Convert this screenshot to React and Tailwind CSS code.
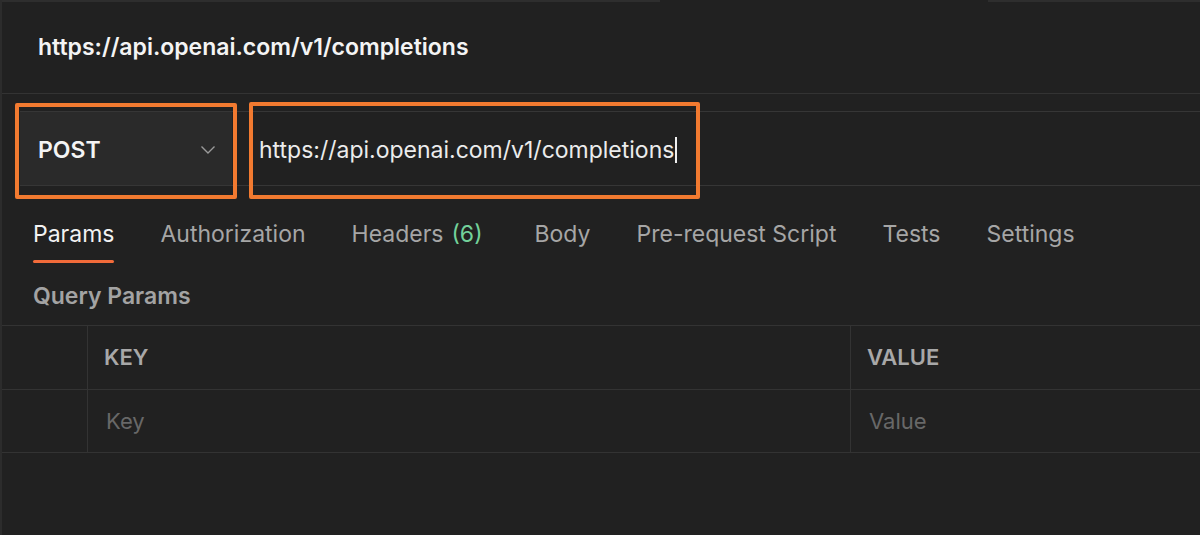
export default function App() {
  const tabs = [
    { label: "Params", active: true },
    { label: "Authorization" },
    { label: "Headers", count: "(6)" },
    { label: "Body" },
    { label: "Pre-request Script" },
    { label: "Tests" },
    { label: "Settings" },
  ];
  return (
    <div
      className="relative flex w-[1200px] h-[535px] overflow-hidden bg-[#212121]"
      style={{ fontFamily: "Inter, 'Noto Sans', sans-serif" }}
    >
      <div className="w-[2px] shrink-0 bg-[#2c2c2c]" />
      <div className="flex flex-1 flex-col">
        {/* top strip */}
        <div className="flex h-[2px]">
          <div className="w-[658px] bg-[#2e2e2e]" />
          <div className="flex-1" />
          <div className="w-[212px] bg-[#2e2e2e]" />
        </div>
        {/* title */}
        <div className="flex h-[92px] items-center border-b border-[#333333] pl-[36px]">
          <span className="text-[23px] font-semibold text-[#f4f4f4]">
            https://api.openai.com/v1/completions
          </span>
        </div>
        <div className="h-[17px]" />
        {/* url row */}
        <div className="ml-[18px] flex h-[75px] border-y border-[#363636]">
          <div className="flex w-[212px] items-center justify-between bg-[#2a2a2a] pl-[18px] pr-[16px] pt-[3px]">
            <span className="text-[23px] font-semibold text-[#f4f4f4]">POST</span>
            <svg width="16" height="10" viewBox="0 0 16 10" fill="none">
              <polyline points="1.5,1.5 8,8 14.5,1.5" stroke="#9a9a9a" strokeWidth="1.4" />
            </svg>
          </div>
          <div className="flex flex-1 items-center pl-[27px] pt-[3px]">
            <span className="text-[23px] font-normal text-[#ececec]">
              https://api.openai.com/v1/completions
            </span>
            <span className="ml-[1px] inline-block h-[26px] w-[2px] bg-[#f0f0f0]" />
          </div>
        </div>
        {/* tabs */}
        <div className="flex gap-[46px] pl-[31px] pt-[34px]">
          {tabs.map((t) => (
            <div key={t.label} className="flex flex-col">
              <span
                className={`whitespace-nowrap text-[23px] leading-[28px] ${
                  t.active ? "text-[#f2f2f2]" : "text-[#a6a6a6]"
                }`}
              >
                {t.label}
                {t.count && (
                  <span className="ml-[8px] mr-[6px] text-[#73d19a]">{t.count}</span>
                )}
              </span>
              <div
                className={`mt-[12px] h-[3px] rounded-full ${
                  t.active ? "bg-[#f26b3a]" : "bg-transparent"
                }`}
              />
            </div>
          ))}
        </div>
        {/* query params */}
        <div className="mt-[19px] pl-[31px] text-[23px] font-semibold leading-[28px] text-[#a3a3a3]">
          Query Params
        </div>
        {/* table */}
        <div className="mt-[15px] border-t border-[#333333]">
          <div className="flex h-[64px] border-b border-[#333333]">
            <div className="w-[86px] border-r border-[#333333]" />
            <div className="flex w-[763px] items-center border-r border-[#333333] pl-[16px] text-[22px] font-semibold text-[#a8a8a8]">
              KEY
            </div>
            <div className="flex flex-1 items-center pl-[16px] text-[22px] font-semibold text-[#a8a8a8]">
              VALUE
            </div>
          </div>
          <div className="flex h-[63px] border-b border-[#333333]">
            <div className="w-[86px] border-r border-[#333333]" />
            <div className="flex w-[763px] items-center border-r border-[#333333] pl-[18px] text-[22px] text-[#686868]">
              Key
            </div>
            <div className="flex flex-1 items-center pl-[18px] text-[22px] text-[#686868]">
              Value
            </div>
          </div>
        </div>
      </div>
      {/* annotation boxes */}
      <div className="pointer-events-none absolute left-[15px] top-[103px] h-[96px] w-[222px] rounded-[2px] border-[4px] border-[#f27a30]" />
      <div className="pointer-events-none absolute left-[249px] top-[102px] h-[97px] w-[451px] rounded-[2px] border-[4px] border-[#f27a30]" />
    </div>
  );
}
